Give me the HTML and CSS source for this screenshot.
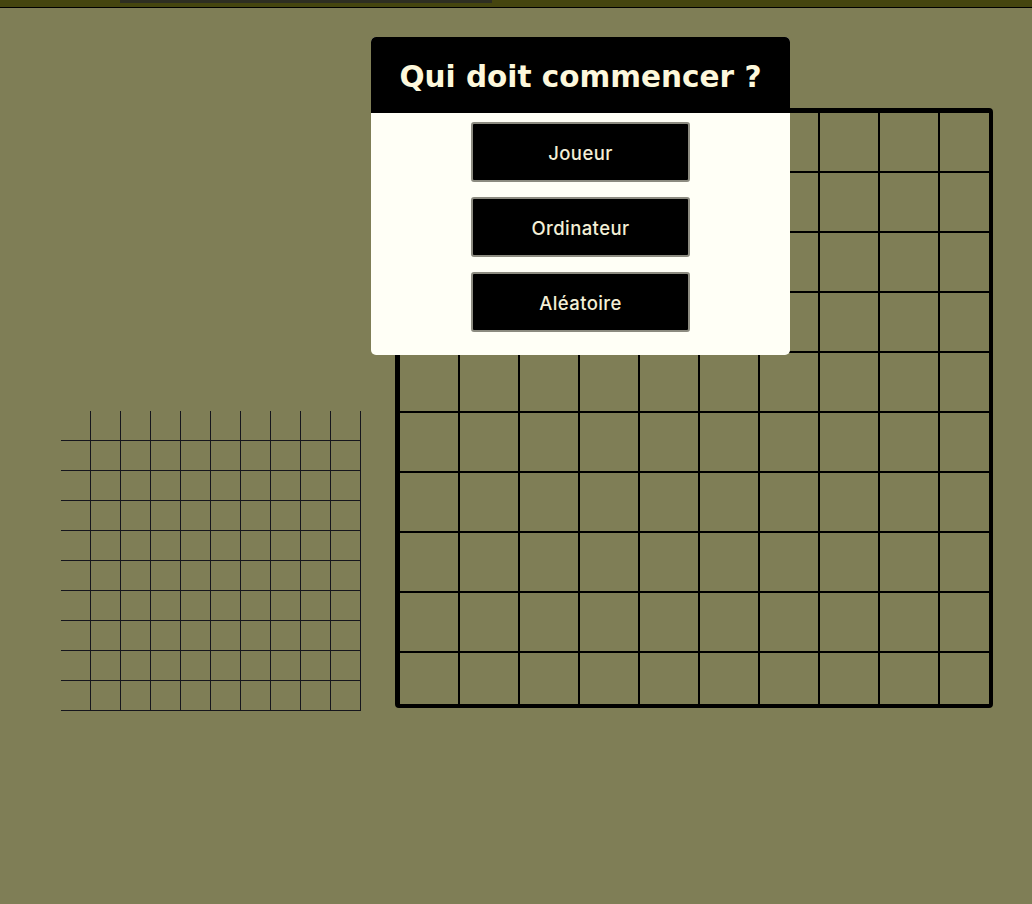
FILE: index.html
```html
<!DOCTYPE html>
<html lang="fr">
<head>
<meta charset="utf-8">
<title>Bataille navale</title>
<link rel="stylesheet" href="styles.css">
</head>
<body>
<div class="topbar"><div class="topbar-strip"></div></div>
<main class="game">
  <div class="mini-grid" id="mini"></div>
  <div class="board"><div class="board-grid" id="board"></div></div>
</main>
<div class="modal">
  <div class="modal-head"><h1 class="modal-title">Qui doit commencer ?</h1></div>
  <div class="modal-body">
    <button class="choice">Joueur</button>
    <button class="choice">Ordinateur</button>
    <button class="choice">Aléatoire</button>
  </div>
</div>
<script src="script.js"></script>
</body>
</html>
```
FILE: script.js
```js
var mini = document.getElementById('mini');
var board = document.getElementById('board');
for (var i = 0; i < 100; i++) {
  var a = document.createElement('div');
  a.className = 'mini-cell';
  mini.appendChild(a);
  var b = document.createElement('div');
  b.className = 'board-cell';
  board.appendChild(b);
}
```
FILE: styles.css
```css
html, body {
  margin: 0;
  padding: 0;
}
body {
  background: #7f7e56;
  font-family: "DejaVu Sans", Inter, sans-serif;
  width: 1032px;
  height: 904px;
  overflow: hidden;
  position: relative;
}
.topbar {
  height: 7px;
  background: #45450f;
  border-bottom: 1px solid #000;
}
.topbar-strip {
  margin-left: 120px;
  width: 372px;
  height: 3px;
  background: #2e2e22;
}
.game {
  display: flex;
  align-items: flex-start;
  padding: 100px 0 0 61px;
  gap: 34px;
}
.mini-grid {
  margin-top: 303px;
  width: 300px;
  height: 300px;
  display: grid;
  grid-template-columns: repeat(10, 30px);
  grid-template-rows: repeat(10, 30px);
}
.mini-cell {
  box-sizing: border-box;
  border-right: 1px solid #15151c;
  border-bottom: 1px solid #15151c;
}
.board {
  box-sizing: border-box;
  width: 598px;
  height: 600px;
  border: 4px solid #000;
  border-radius: 4px;
  overflow: hidden;
}
.board-grid {
  display: grid;
  grid-template-columns: repeat(10, 60px);
  grid-template-rows: repeat(10, 60px);
}
.board-cell {
  box-sizing: border-box;
  border: 1px solid #000;
}
.modal {
  position: absolute;
  left: 371px;
  top: 37px;
  width: 419px;
  height: 318px;
  border-radius: 5px;
  overflow: hidden;
  background: #fffff6;
  display: flex;
  flex-direction: column;
}
.modal-head {
  height: 76px;
  background: #000;
  display: flex;
  align-items: center;
  justify-content: center;
}
.modal-title {
  margin: 0;
  padding-top: 3px;
  color: #fdf8dc;
  font-family: "DejaVu Sans", sans-serif;
  font-size: 29.5px;
  font-weight: 700;
  letter-spacing: 0;
}
.modal-body {
  display: flex;
  flex-direction: column;
  align-items: center;
  gap: 15px;
  padding-top: 9px;
}
.choice {
  box-sizing: border-box;
  width: 219px;
  height: 60px;
  background: #000;
  border: 2px solid #8c8b80;
  border-radius: 3px;
  color: #f3efd6;
  font-family: Inter, "DejaVu Sans", sans-serif;
  font-size: 18.5px;
  font-weight: 500;
  letter-spacing: 0.4px;
  padding-top: 2px;
  cursor: pointer;
}
```
